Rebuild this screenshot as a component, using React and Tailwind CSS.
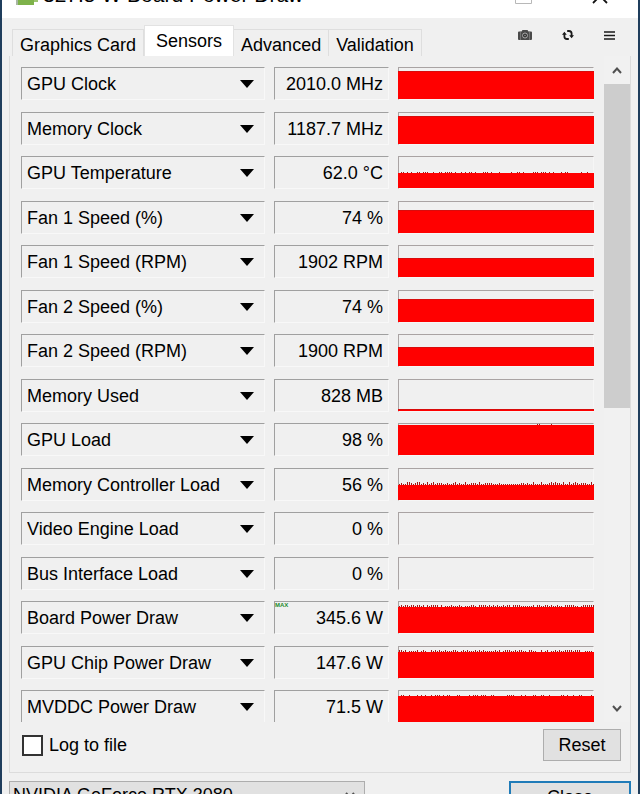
import React, { useState } from 'react';

const RED = '#ff0000';
const DARK_RED = '#a01818';

// level = height of the filled part, noise = density of the 1px peaks on top, peak = tallest peak
const SENSORS = [
  { name: 'GPU Clock', value: '2010.0 MHz', level: 28, noise: 0 },
  { name: 'Memory Clock', value: '1187.7 MHz', level: 28, noise: 0 },
  { name: 'GPU Temperature', value: '62.0 °C', level: 15, noise: 0.35, peak: 1 },
  { name: 'Fan 1 Speed (%)', value: '74 %', level: 23, noise: 0 },
  { name: 'Fan 1 Speed (RPM)', value: '1902 RPM', level: 19, noise: 0 },
  { name: 'Fan 2 Speed (%)', value: '74 %', level: 23, noise: 0 },
  { name: 'Fan 2 Speed (RPM)', value: '1900 RPM', level: 19, noise: 0 },
  { name: 'Memory Used', value: '828 MB', level: 2, noise: 0 },
  { name: 'GPU Load', value: '98 %', level: 30, noise: 0.05, peak: 1 },
  { name: 'Memory Controller Load', value: '56 %', level: 15, noise: 1, peak: 3 },
  { name: 'Video Engine Load', value: '0 %', level: 0, noise: 0 },
  { name: 'Bus Interface Load', value: '0 %', level: 0, noise: 0 },
  { name: 'Board Power Draw', value: '345.6 W', level: 26, noise: 0.9, peak: 2, max: true },
  { name: 'GPU Chip Power Draw', value: '147.6 W', level: 26, noise: 0.8, peak: 2 },
  { name: 'MVDDC Power Draw', value: '71.5 W', level: 26, noise: 0.5, peak: 1 },
];

const TABS = ['Graphics Card', 'Sensors', 'Advanced', 'Validation'];

function getPeaks(noise, peak, seed) {
  const peaks = [];
  let n = seed * 97 + 13;
  for (let x = 1; x < 196; x += 2) {
    n = (n * 1103515 + 12345) % 65536;
    const r = n / 65536;
    if (r < noise) {
      let h = 1;
      if (r < noise * 0.5) h = Math.min(2, peak);
      if (r < noise * 0.15) h = peak;
      peaks.push({ x, h });
    }
  }
  return peaks;
}

function Graph({ level, noise, peak, seed }) {
  return (
    <div className="h-[33px] border-t border-l border-[#a9a3a3] border-r border-r-[#f6f6f6] border-b border-b-[#f6f6f6]">
      <svg viewBox="0 0 196 31" preserveAspectRatio="none" shapeRendering="crispEdges" className="block w-[calc(100%+2px)] max-w-none h-full -ml-px">
        {level > 0 && <rect x="0" y={31 - level} width="196" height={level} fill={RED} />}
        {level > 0 && noise === 0 && <rect x="0" y={31 - level} width="196" height="1" fill="#d80c0c" />}
        {getPeaks(noise, peak, seed).map((p) => (
          <rect key={p.x} x={p.x} y={31 - level - p.h} width="1" height={p.h} fill={DARK_RED} />
        ))}
      </svg>
    </div>
  );
}

function SensorRow({ sensor, seed }) {
  return (
    <li className="grid grid-cols-[244px_115px_1fr] gap-[9px] odd:mb-3 even:mb-[11px]">
      <div className="relative h-[33px] border-t border-l border-[#a0a0a0] border-r border-r-[#f8f8f8] border-b border-b-[#f8f8f8]">
        <select aria-label={sensor.name} className="appearance-none block w-full h-full pl-[5px] bg-transparent outline-none">
          <option>{sensor.name}</option>
        </select>
        <svg viewBox="0 0 14 8" className="absolute right-[10px] top-3 w-[14px] h-[8px] pointer-events-none">
          <path d="M0 0H14L7 8Z" fill="#000" />
        </svg>
      </div>
      <div className="relative h-[33px] pr-[5px] flex items-center justify-end border-t border-l border-[#a0a0a0] border-r border-r-[#f8f8f8] border-b border-b-[#f8f8f8]">
        {sensor.max && <span className="absolute left-0 top-0 text-[6px] leading-[7px] font-bold text-[#1c8a2c]">MAX</span>}
        {sensor.value}
      </div>
      <Graph level={sensor.level} noise={sensor.noise} peak={sensor.peak} seed={seed} />
    </li>
  );
}

function CameraIcon() {
  return (
    <svg viewBox="0 0 14 10" className="w-[14px] h-[10px]">
      <path d="M0 2.5Q0 1.5 1 1.5H3.5L4.5 0H9.5L10.5 1.5H13Q14 1.5 14 2.5V9Q14 10 13 10H1Q0 10 0 9Z" fill="#4a4a4a" />
      <path d="M2.5 1.5V10M11.5 1.5V10" stroke="#858585" strokeWidth="0.7" />
      <circle cx="7" cy="5.5" r="2.5" fill="#333" stroke="#b4b4b4" strokeWidth="0.9" />
      <circle cx="7" cy="5.5" r="0.7" fill="#aaa" />
    </svg>
  );
}

function RefreshIcon() {
  return (
    <svg viewBox="0 0 12 10" className="w-3 h-[10px]">
      <path d="M5.2 1H7Q9.6 1 9.6 3.6V6M6.8 9H5Q2.4 9 2.4 6.4V4" fill="none" stroke="#1a1a1a" strokeWidth="1.8" />
      <path d="M7.2 5.2H12L9.6 8.2ZM0 4.8H4.8L2.4 1.8Z" fill="#1a1a1a" />
    </svg>
  );
}

function MenuIcon() {
  return (
    <svg viewBox="0 0 11 9" className="w-[11px] h-[9px]">
      <path d="M0 1H11M0 4.5H11M0 8H11" stroke="#1a1a1a" strokeWidth="1.6" />
    </svg>
  );
}

function Chevron({ up, className }) {
  return (
    <svg viewBox="0 0 10 7" className={className}>
      <path d={up ? 'M1 6L5 1.5L9 6' : 'M1 1L5 5.5L9 1'} fill="none" stroke="#505050" strokeWidth="2" />
    </svg>
  );
}

export default function App() {
  const [tab, setTab] = useState('Sensors');
  const [log, setLog] = useState(false);

  return (
    <div className="h-screen overflow-hidden flex flex-col bg-[#f0f0f0] border-x-2 border-[#1f3d5c] text-black text-[18px] leading-5 font-['Liberation_Sans',Arial,sans-serif]">
      {/* title bar, scrolled mostly out of view */}
      <header className="shrink-0 h-[18px] overflow-hidden bg-white flex items-end justify-between pl-[14px] pr-[30px] pb-[13px]">
        <div className="flex items-end gap-[5px]">
          <svg viewBox="0 0 22 16" className="w-[22px] h-4">
            <path d="M2 0H18V16H2Z" fill="#7eb24a" />
            <path d="M0 0H2V16H0Z" fill="#a9b7a4" />
            <path d="M18 0H22V13H18Z" fill="#9cc46f" />
          </svg>
          <h1 className="text-[21px] leading-5 whitespace-nowrap">327.5 W Board Power Draw</h1>
        </div>
        <div className="flex items-end gap-[60px]">
          <svg viewBox="0 0 17 16" className="w-[17px] h-4">
            <path d="M0.5 0.5H16.5V14.5H0.5Z" fill="none" stroke="#b8b8b8" />
          </svg>
          <svg viewBox="0 0 16 16" className="w-4 h-4">
            <path d="M1 0L15 14M15 0L1 14" stroke="#111" strokeWidth="1.8" />
          </svg>
        </div>
      </header>

      <div className="shrink-0 h-[38px] pl-[10px] pr-[23px] flex items-end justify-between">
        <div role="tablist" className="flex items-end">
          {TABS.map((name) => (
            <button
              key={name}
              role="tab"
              aria-selected={tab === name}
              onClick={() => setTab(name)}
              className={
                tab === name
                  ? 'h-[31px] px-[11px] bg-white border-t border-x border-[#e2e2e2]'
                  : 'h-[27px] px-[7px] pt-[3px] border-t border-r first:border-l border-[#dedede]'
              }
            >
              {name}
            </button>
          ))}
        </div>
        <div className="flex items-center gap-[30px] self-start mt-3">
          <button aria-label="Screenshot"><CameraIcon /></button>
          <button aria-label="Refresh"><RefreshIcon /></button>
          <button aria-label="Menu"><MenuIcon /></button>
        </div>
      </div>

      <main className="shrink-0 mx-[7px] pb-[11px] border-x border-b border-[#dcdcdc]">
        <div className="flex">
          <ul className="flex-1 h-[666px] overflow-hidden pt-[11px] pl-[11px] pr-[10px]">
            {SENSORS.map((s, i) => (
              <SensorRow key={s.name} sensor={s} seed={i} />
            ))}
          </ul>
          <div className="w-[26px] h-[666px] flex flex-col bg-[#f1f1f1]">
            <button aria-label="Scroll up" className="h-7 flex items-center justify-center">
              <Chevron up className="w-[10px] h-[7px]" />
            </button>
            <div className="flex-1">
              <div className="h-[324px] bg-[#cdcdcd]" />
            </div>
            <button aria-label="Scroll down" className="h-7 flex items-center justify-center">
              <Chevron className="w-[10px] h-[7px]" />
            </button>
          </div>
        </div>
        <div className="flex items-center justify-between pt-[7px] pl-3 pr-[9px]">
          <label className="flex items-center gap-[6px]">
            <input
              type="checkbox"
              checked={log}
              onChange={(e) => setLog(e.target.checked)}
              className="appearance-none w-[21px] h-[21px] bg-white checked:bg-[#333] border-2 border-[#333]"
            />
            Log to file
          </label>
          <button className="w-[78px] h-8 bg-[#e1e1e1] border border-[#adadad]">Reset</button>
        </div>
      </main>

      <footer className="shrink-0 flex items-start justify-between pt-2 mx-[7px]">
        <div className="relative w-[356px] h-[27px] bg-[#e1e1e1] border border-[#adadad]">
          <select aria-label="Graphics card" className="appearance-none block w-full h-full pl-[3px] bg-transparent outline-none">
            <option>NVIDIA GeForce RTX 3080</option>
          </select>
          <Chevron className="absolute right-2 top-[10px] w-[12px] h-[7px] pointer-events-none" />
        </div>
        <button className="w-[122px] h-8 bg-[#e1e1e1] border-2 border-[#1f7bb8]">Close</button>
      </footer>
    </div>
  );
}
